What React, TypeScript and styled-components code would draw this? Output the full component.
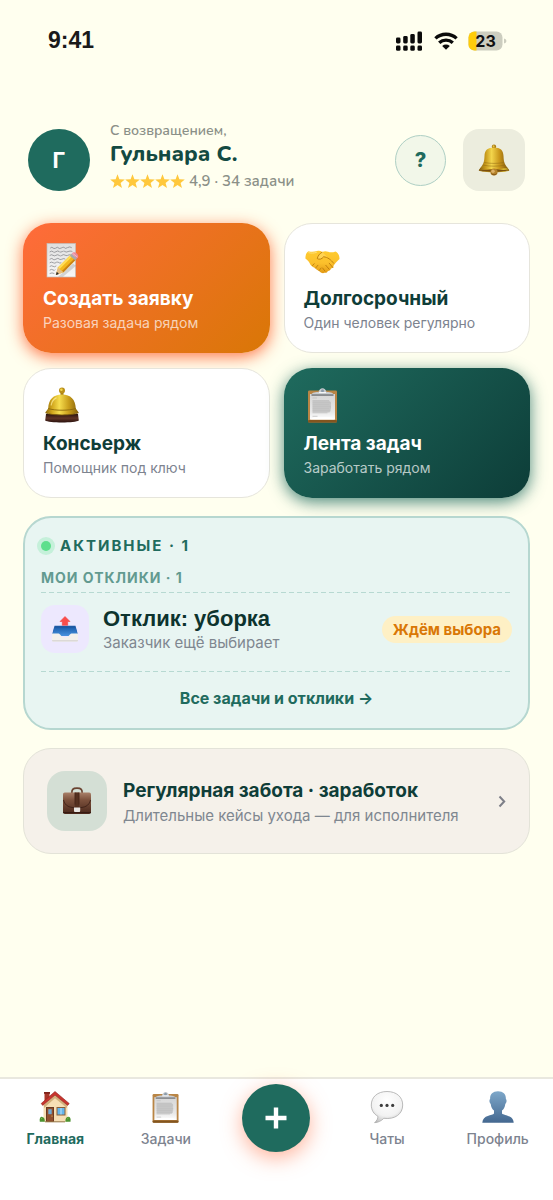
import React from "react";
import styled, { createGlobalStyle, css } from "styled-components";

const GlobalStyle = createGlobalStyle`
  * { box-sizing: border-box; }
  body {
    margin: 0;
    background: #ffffef;
    font-family: Inter, "Noto Sans", sans-serif;
    color: #0f3d38;
  }
  button { font: inherit; color: inherit; cursor: pointer; }
  h1, h2, h3, p { margin: 0; }
  svg { display: block; flex: none; }
`;

const Page = styled.div`
  display: flex;
  flex-direction: column;
  min-height: 100vh;
`;

/* ---------- Status bar ---------- */

const StatusBar = styled.div`
  display: flex;
  align-items: center;
  justify-content: space-between;
  padding: 24px 46px 0 48px;
`;

const Clock = styled.time`
  font: 700 23px/32px "Liberation Sans", sans-serif;
  color: #1a1a1a;
`;

const StatusIcons = styled.div`
  display: flex;
  align-items: center;
  gap: 10px;
  padding-top: 2px;
`;

/* ---------- Header ---------- */

const Header = styled.header`
  display: flex;
  align-items: center;
  padding: 66px 28px 0;
`;

const Avatar = styled.div`
  display: grid;
  place-items: center;
  flex: none;
  width: 62px;
  height: 62px;
  border-radius: 50%;
  background: #1f6b5e;
  color: #fff;
  font-size: 22px;
  font-weight: 700;
`;

const Greeting = styled.div`
  flex: 1;
  min-width: 0;
  margin-left: 20px;
  padding-bottom: 4px;
  font-family: Nunito, Lato, "Open Sans", sans-serif;
  color: #8b9088;
  white-space: nowrap;
`;

const Welcome = styled.p`
  font-size: 14px;
  font-weight: 600;
  line-height: 18px;
`;

const Name = styled.h1`
  font-size: 22px;
  font-weight: 800;
  line-height: 28px;
  color: #134a42;
`;

const Rating = styled.p`
  display: flex;
  align-items: center;
  gap: 4px;
  font-size: 15px;
  font-weight: 600;
  line-height: 26px;
`;

const HelpButton = styled.button`
  flex: none;
  width: 51px;
  height: 51px;
  padding: 0;
  border: 1px solid #aecfc4;
  border-radius: 50%;
  background: #f2f7e9;
  color: #1f6b5e;
  font-size: 20px;
  font-weight: 800;
`;

const BellButton = styled.button`
  display: grid;
  place-items: center;
  flex: none;
  width: 62px;
  height: 62px;
  margin-left: 17px;
  padding: 0;
  border: 0;
  border-radius: 16px;
  background: #ecedde;
`;

/* ---------- Main content ---------- */

const Content = styled.main`
  display: flex;
  flex-direction: column;
  gap: 18px;
  padding: 25px 23px 24px;
`;

const ActionGrid = styled.div`
  display: grid;
  grid-template-columns: 1fr 1fr;
  gap: 15px 14px;
`;

type Tone = "orange" | "plain" | "green";

const tones = {
  plain: css`
    background: #fff;
    border-color: #e6e5dc;
    color: #0f3d38;
  `,
  orange: css`
    background: linear-gradient(135deg, #ff6b3b, #d97706) border-box;
    box-shadow: 0 4px 16px rgba(255, 107, 59, 0.9);
    color: #fff;
  `,
  green: css`
    background: linear-gradient(135deg, #1f6b5e, #0d3d38) border-box;
    box-shadow: 0 4px 16px rgba(31, 107, 94, 0.8);
    color: #fff;
  `,
};

const ActionCard = styled.button<{ $tone: Tone }>`
  display: flex;
  flex-direction: column;
  align-items: flex-start;
  height: 130px;
  padding: 17px 19px 0;
  border: 1px solid transparent;
  border-radius: 28px;
  text-align: left;
  white-space: nowrap;
  ${(p) => tones[p.$tone]}
`;

const ActionTitle = styled.span`
  margin-top: 8px;
  font-size: 19px;
  font-weight: 700;
  line-height: 24px;
`;

const ActionNote = styled.span<{ $tone: Tone }>`
  margin-top: 2px;
  font-size: 14px;
  line-height: 20px;
  color: ${(p) => (p.$tone === "plain" ? "#7d838f" : "rgba(255, 255, 255, 0.7)")};
`;

const ActivePanel = styled.section`
  padding: 18px 16px 20px;
  border: 2px solid #b6d7d0;
  border-radius: 28px;
  background: #e8f5f2;
`;

const PanelTitle = styled.h2`
  display: flex;
  align-items: center;
  gap: 9px;
  font-size: 15px;
  font-weight: 700;
  line-height: 20px;
  letter-spacing: 2px;
  color: #1f6b5e;
`;

const LiveDot = styled.span`
  width: 10px;
  height: 10px;
  border-radius: 50%;
  background: #5ddf8c;
  box-shadow: 0 0 0 4px #c5f0da;
`;

const PanelSubtitle = styled.h3`
  margin: 13px 0 5px;
  font-size: 14px;
  font-weight: 700;
  line-height: 18px;
  letter-spacing: 1px;
  color: #629a90;
`;

const DashedRule = styled.hr`
  height: 1px;
  margin: 0;
  border: 0;
  background: repeating-linear-gradient(90deg, #b7d9d2 0 5px, transparent 5px 8px);
`;

const ReplyRow = styled.article`
  display: flex;
  align-items: center;
  padding: 12px 0 18px;
`;

const IconTile = styled.div<{ $size: number; $color: string }>`
  display: grid;
  place-items: center;
  flex: none;
  width: ${(p) => p.$size}px;
  height: ${(p) => p.$size}px;
  border-radius: ${(p) => (p.$size > 50 ? 18 : 14)}px;
  background: ${(p) => p.$color};
`;

const RowText = styled.div`
  flex: 1;
  min-width: 0;
  white-space: nowrap;
`;

const ReplyText = styled(RowText)`
  margin-left: 14px;
`;

const ReplyTitle = styled.h3`
  font: 700 22px/28px "Liberation Sans", sans-serif;
  color: #0d332e;
`;

const Note = styled.p`
  font-size: 15px;
  line-height: 20px;
  color: #7f8790;
`;

const Badge = styled.span`
  padding: 0 11px;
  border-radius: 14px;
  background: #fef0c5;
  color: #d97706;
  font-size: 15px;
  font-weight: 700;
  line-height: 27px;
  white-space: nowrap;
`;

const AllLink = styled.a`
  display: block;
  padding-top: 16px;
  font-size: 16px;
  font-weight: 700;
  line-height: 20px;
  text-align: center;
  text-decoration: none;
  color: #1f6b5e;
`;

const CareCard = styled.button`
  display: flex;
  align-items: center;
  width: 100%;
  padding: 22px 23px;
  border: 1px solid #e3e3d8;
  border-radius: 28px;
  background: #f5f1ea;
  text-align: left;
`;

const CareText = styled(RowText)`
  margin-left: 16px;
`;

const CareTitle = styled.h2`
  font-size: 19px;
  font-weight: 700;
  line-height: 30px;
`;

/* ---------- Bottom navigation ---------- */

const TabBar = styled.nav`
  display: grid;
  grid-template-columns: repeat(5, 1fr);
  height: 123px;
  margin-top: auto;
  border-top: 2px solid #e9e8df;
  background: #fff;
`;

const Tab = styled.a<{ $active?: boolean }>`
  display: flex;
  flex-direction: column;
  align-items: center;
  gap: 5px;
  padding-top: 11px;
  font-size: 14px;
  font-weight: ${(p) => (p.$active ? 700 : 500)};
  line-height: 20px;
  text-decoration: none;
  color: ${(p) => (p.$active ? "#1f6b5e" : "#7d838f")};
`;

const AddButton = styled.button`
  display: grid;
  place-items: center;
  justify-self: center;
  width: 68px;
  height: 68px;
  margin-top: 5px;
  padding: 0;
  border: 0;
  border-radius: 50%;
  background: #1f6b5e;
  box-shadow: 0 6px 20px rgba(255, 107, 59, 0.5);
`;

/* ---------- Drawings ---------- */

const Signal = () => (
  <svg width="28" height="20" viewBox="0 0 28 20" aria-hidden="true">
    <g fill="#0b0b0b">
      <rect x="0" y="6.500" width="4.500" height="6" rx="1.400" />
      <rect x="7.200" y="5" width="4.500" height="7.500" rx="1.400" />
      <rect x="14.300" y="3" width="4.500" height="9.500" rx="1.400" />
      <rect x="21.500" y="0.500" width="4.500" height="12" rx="1.400" />
      <rect x="0" y="14.500" width="4.500" height="5.300" rx="1.400" />
      <rect x="7.200" y="14.500" width="4.500" height="5.300" rx="1.400" />
      <rect x="14.300" y="14.500" width="4.500" height="5.300" rx="1.400" />
      <rect x="21.500" y="14.500" width="4.500" height="5.300" rx="1.400" />
    </g>
  </svg>
);

const Wifi = () => (
  <svg width="24" height="20" viewBox="0 0 24 20" aria-hidden="true">
    <g fill="none" stroke="#0b0b0b" strokeWidth="3.300">
      <path d="M1.400 7.400a15.600 15.600 0 0 1 21.200 0" />
      <path d="M5.200 11.700a10 10 0 0 1 13.600 0" />
    </g>
    <path d="M8.200 15a5.600 5.600 0 0 1 7.600 0L12 18.800z" fill="#0b0b0b" />
  </svg>
);

const Battery = () => (
  <svg width="39" height="20" viewBox="0 0 39 20" role="img" aria-label="23%">
    <defs>
      <clipPath id="cell"><rect x="0.500" y="0.500" width="34" height="19" rx="6" /></clipPath>
    </defs>
    <g clipPath="url(#cell)">
      <rect width="36" height="20" fill="#cccdbf" />
      <rect width="8.500" height="20" fill="#ffcc0a" />
    </g>
    <path d="M36 7.500c1.800.6 2.400 1.400 2.400 2.500s-.6 1.900-2.400 2.500z" fill="#cccdbf" />
    <text x="17.500" y="15.800" textAnchor="middle" fontFamily="Inter, sans-serif" fontWeight="700" fontSize="16" fill="#111">23</text>
  </svg>
);

const Stars = () => (
  <svg width="75" height="15" viewBox="0 0 75 15" role="img" aria-label="5 звёзд">
    {[0, 15, 30, 45, 60].map((x) => (
      <path
        key={x}
        transform={`translate(${x} 0)`}
        fill="#ffc83d"
        d="M7.500 0.300l1.900 5 5.400.2-4.200 3.400 1.400 5.200-4.500-3-4.500 3 1.400-5.200L.2 5.500l5.400-.2z"
      />
    ))}
  </svg>
);

const BellArt = () => (
  <svg width="32" height="32" viewBox="0 0 32 32" aria-hidden="true">
    <defs>
      <linearGradient id="bellBody" x1="0" x2="1">
        <stop offset="0" stopColor="#8a6410" /><stop offset=".22" stopColor="#c79a1c" />
        <stop offset=".42" stopColor="#f3d54c" /><stop offset=".68" stopColor="#c9961a" />
        <stop offset="1" stopColor="#76500d" />
      </linearGradient>
      <linearGradient id="bellRim" x1="0" x2="1">
        <stop offset="0" stopColor="#7c5512" /><stop offset=".3" stopColor="#e0b326" />
        <stop offset=".6" stopColor="#b98516" /><stop offset=".8" stopColor="#ecd03c" /><stop offset="1" stopColor="#86600f" />
      </linearGradient>
    </defs>
    <circle cx="16" cy="2.800" r="2.200" fill="#a87a14" />
    <circle cx="15.600" cy="2.300" r="1" fill="#e7c443" />
    <path d="M16 3.500c-6.400 0-9.300 2.800-9.500 8.600-.2 6-1.200 8.400-4 11.700L.8 26.600h30.400l-1.700-2.800c-2.800-3.300-3.800-5.700-4-11.700C25.300 6.300 22.400 3.500 16 3.500z" fill="url(#bellBody)" />
    <path d="M4.800 21c6.500 1.600 15.900 1.600 22.400 0M6.200 18.500c6 1.200 13.600 1.200 19.600 0" fill="none" stroke="#8d6611" strokeWidth=".7" opacity=".7" />
    <path d="M2.500 23.800L.7 26.400c4.800 2.500 25.800 2.500 30.600 0l-1.800-2.600c-6 1.600-21 1.600-27 0z" fill="url(#bellRim)" />
    <path d="M2 26.600c6-1.400 22-1.400 28 0-6 1.900-22 1.900-28 0z" fill="#7a4f10" />
    <circle cx="16" cy="28" r="3.600" fill="#b5822a" />
    <circle cx="15" cy="27.200" r="1.700" fill="#dcb068" />
    <path d="M13.500 29.500a3 3 0 0 0 5 0" stroke="#714511" strokeWidth=".8" fill="none" />
  </svg>
);

const NoteArt = () => (
  <svg width="38" height="38" viewBox="0 0 38 38" aria-hidden="true">
    <defs>
      <linearGradient id="sheet" x1="0" y1="0" x2="0" y2="1">
        <stop offset="0" stopColor="#dfdfdf" /><stop offset="1" stopColor="#f7f7f7" />
      </linearGradient>
    </defs>
    <rect x="4" y="2.500" width="28.500" height="33.500" fill="url(#sheet)" stroke="#c4beb9" strokeWidth=".7" />
    <g fill="none" stroke="#6a6c70" strokeWidth=".6" strokeLinecap="round">
      <path d="M7.500 6.900q1.500-1.400 2.500 0t3 0 2.500 0 3 0 3-.1 3-.2 4-.1" strokeDasharray="5 .8 3 .7" />
      <path d="M7 10.700q2-1.400 3 0t3 0 3-.2 3 .2 3-.1 3 0 4-.2" strokeDasharray="3 1 6 .8" />
      <path d="M7 14.300q1.500-1.200 3 0t3 0 3 0 3 0 3-.2 3 .1 3-.1" strokeDasharray="6 .8 4 1" />
      <path d="M7 18.100q2-1.400 3 0t3 0 3-.2 3 .2 3-.2" strokeDasharray="4 .6 7 .8" />
      <path d="M7 21.600q1.500-1.200 3 0t3 0 3 0 2-.1" strokeDasharray="3 .8" />
      <path d="M7 25.300q1.500-1.200 3 0t3-.2" />
      <path d="M7 28.900q1.500-1.200 3 0t2 0M7 32.400q2-1.200 4 0" />
    </g>
    <path d="M15 35.700l15-13 3 2L20 35.800z" fill="#6f6f6f" opacity=".25" />
    <path d="M12.800 34l2.300-7.700L28 13.500l5.200 4.700L20.500 31.300z" fill="#f3b81c" />
    <path d="M15.100 26.300L28 13.500l1.700 1.500L16.600 28z" fill="#ffdc55" />
    <path d="M18.900 30L32 17l1.200 1.200-12.700 13.100z" fill="#c88216" />
    <path d="M12.800 34l2.300-7.700 1.500 1.700 2.300 2 1.600 1.300z" fill="#e5bd83" />
    <path d="M12.800 34l1-3.200 2.200 2.100z" fill="#2b2b2b" />
    <path d="M26.800 14.700l1.900-1.900 5.400 4.600-2 1.900z" fill="#a9a9ad" />
    <path d="M28.700 12.800l1.100-1.100c2-1.900 6.900 2.100 5 4.800l-.8.900z" fill="#e9899a" />
    <path d="M29.500 12.200l4.800 3.900" stroke="#f7bdc5" strokeWidth="1" />
  </svg>
);

const HandshakeArt = () => (
  <svg width="38" height="38" viewBox="0 0 38 38" aria-hidden="true">
    <defs>
      <linearGradient id="hand" x1="0" y1="0" x2="0" y2="1">
        <stop offset="0" stopColor="#ffcb2f" /><stop offset=".55" stopColor="#fbc02c" /><stop offset="1" stopColor="#e39a13" />
      </linearGradient>
    </defs>
    <path d="M4.500 10.300c-2 .7-3.200 4-3.100 7.300 1.700 1.400 3.100 2.300 4 4.200 1.200 3 3.600 4.500 5.600 5.300 1.500 1.800 3.200 2.500 4.700 3.500 1.500 1.600 3.500 1.900 4.700 1.200 1.700.3 3-.5 3.500-1.900 1.700 0 2.800-.9 3-2.400 1.600-.4 2.700-1.400 2.600-2.800 1.900-2.800 4-4.700 6-6.700.1-3.400-1.600-6.800-3.900-7.600-2.800 1-5.100 1.300-7.400.4-2.500-1-4-.7-5.900.3-1.800-1.200-3.200-1.500-5.200-1-3.500.9-5.700 1-8.600.2z" fill="url(#hand)" />
    <path d="M18.300 11.100c-2.800 1.500-4.500 3.800-5 6.500 1.900 1.200 4.400.7 6.300-1.800 3.900.2 7.300 2.900 10.200 6.700" fill="#ffd352" stroke="#b97809" strokeWidth=".9" strokeLinejoin="round" />
    <path d="M25.200 22.200l3.700 4.400M21.800 24.300l3.300 3.900M18.600 27l2.300 3" fill="none" stroke="#bd7c0b" strokeWidth=".9" strokeLinecap="round" />
    <path d="M8.500 24.600l1.700-1.900M11.700 27l2.200-2.700M15.200 29.500l1.800-2.400" fill="none" stroke="#c58510" strokeWidth="1" strokeLinecap="round" />
    <path d="M4.400 11.600c2.800.7 5.700.6 8.400-.3" fill="none" stroke="#ffe07a" strokeWidth="1" />
  </svg>
);

const ServiceBellArt = () => (
  <svg width="38" height="38" viewBox="0 0 38 38" aria-hidden="true">
    <defs>
      <linearGradient id="dome" x1="0" x2="1">
        <stop offset="0" stopColor="#8d6a0c" /><stop offset=".2" stopColor="#d0a51c" />
        <stop offset=".42" stopColor="#f6dd4e" /><stop offset=".7" stopColor="#c99e1b" /><stop offset="1" stopColor="#84600b" />
      </linearGradient>
      <linearGradient id="woodBase" x1="0" y1="0" x2="0" y2="1">
        <stop offset="0" stopColor="#2b1410" /><stop offset=".5" stopColor="#5f3426" /><stop offset="1" stopColor="#2a120e" />
      </linearGradient>
    </defs>
    <path d="M3 28h32l.8 6.500c-3 2.600-30.600 2.600-33.600 0z" fill="url(#woodBase)" />
    <rect x="17.500" y="5" width="3" height="5" fill="#a37a12" />
    <circle cx="19" cy="4.500" r="3" fill="#ba8f18" />
    <circle cx="18.400" cy="3.700" r="1.300" fill="#f2d64f" />
    <path d="M19 8.500C10.200 8.500 5.600 13.500 5.200 22.500L2.300 26.500c4 3.200 29.400 3.200 33.400 0L32.800 22.500C32.400 13.500 27.800 8.500 19 8.500z" fill="url(#dome)" />
    <path d="M5.200 22.500c6.200 2.300 21.400 2.300 27.600 0" fill="none" stroke="#8d6a0c" strokeWidth=".9" />
    <path d="M2.500 26.800c5 2.900 28 2.900 33 0" fill="none" stroke="#7d5b0b" strokeWidth=".8" />
    <path d="M8.200 19c.6-3.700 2.400-5.800 5-7.100" fill="none" stroke="#fff0a0" strokeWidth="1.200" strokeLinecap="round" opacity=".7" />
  </svg>
);

const ClipboardArt = ({ size = 38, id }: { size?: number; id: string }) => (
  <svg width={size} height={size} viewBox="0 0 38 38" aria-hidden="true">
    <defs>
      <linearGradient id={id} x1="0" y1="0" x2="0" y2="1">
        <stop offset="0" stopColor="#d6d6d6" /><stop offset=".7" stopColor="#e8e8e8" /><stop offset="1" stopColor="#fff" />
      </linearGradient>
    </defs>
    <rect x="4" y="4.500" width="29" height="32" rx="1.300" fill="#b98545" />
    <rect x="4" y="34" width="29" height="2.500" rx="1" fill="#83551f" />
    <rect x="6" y="8" width="25" height="25.500" fill={`url(#${id})`} />
    <path d="M6 33.500h25l-4-2.200H10z" fill="#fff" />
    <path d="M8.500 14.200h16.500l2 2v6.500l-1.500 3.800h-17z" fill="#c9c9c9" />
    <g stroke="#bcbcbc" strokeWidth=".7">
      <path d="M8.500 12h4.500M8.500 14.800h16.500M8.500 16.800h18M8.500 18.800h17M8.500 20.800h18.500M8.500 22.800h17M8.500 24.800h18M8.500 26.800h15M8.500 30.300h5" />
    </g>
    <path d="M7.500 9.200c0-2.300 2-2.900 7-3.100.6-2.400 2.200-3.900 4-3.900s3.400 1.500 4 3.900c5 .2 7 .8 7 3.100z" fill="#c9ccd0" />
    <path d="M7.500 8.400h22v1.300h-22z" fill="#6b6e72" />
    <circle cx="18.500" cy="4.700" r="1.500" fill="#8b9cab" />
    <path d="M15 6.500h7" stroke="#f5f7f8" strokeWidth="1" />
  </svg>
);

const OutboxArt = () => (
  <svg width="28" height="28" viewBox="0 0 28 28" aria-hidden="true">
    <defs>
      <linearGradient id="tray" x1="0" y1="0" x2="0" y2="1">
        <stop offset="0" stopColor="#1f62b0" /><stop offset="1" stopColor="#4a93df" />
      </linearGradient>
    </defs>
    <path d="M3.500 10.800h21L27 20H1z" fill="#1e5aa5" />
    <path d="M3.200 13h21.600l2 8H1.200z" fill="url(#tray)" />
    <path d="M1 18.500h6.500c2 0 2.300 4 6.500 4s4.500-4 6.500-4H27v6.600c0 1.100-.5 1.500-1.500 1.500h-23C1.500 26.600 1 26.200 1 25.100z" fill="#f4f1ec" />
    <path d="M1 25h26c0 1.200-.5 1.600-1.500 1.600h-23C1.500 26.600 1 26.200 1 25z" fill="#dcd9d6" />
    <path d="M14 1.500l5 5h-2.300v3.800h-5.400V6.500H9z" fill="#fb4d4a" stroke="#f04444" strokeWidth=".6" strokeLinejoin="round" />
  </svg>
);

const BriefcaseArt = () => (
  <svg width="30" height="30" viewBox="0 0 30 30" aria-hidden="true">
    <defs>
      <linearGradient id="leather" x1="0" y1="0" x2="0" y2="1">
        <stop offset="0" stopColor="#a98069" /><stop offset=".35" stopColor="#7c513c" /><stop offset="1" stopColor="#4a281c" />
      </linearGradient>
    </defs>
    <path d="M9.800 7.500c0-4 .8-5.300 5.200-5.300s5.200 1.300 5.200 5.300" fill="none" stroke="#6a4331" strokeWidth="1.700" />
    <rect x="1" y="6.500" width="28" height="21.500" rx="1.800" fill="url(#leather)" />
    <path d="M1.500 14c1.500 6.200 6 7.800 13.500 7.800S27 20.200 28.500 14" fill="none" stroke="#3e2117" strokeWidth=".9" />
    <path d="M12.800 6.500h4.400v15h-4.400z" fill="#55301f" />
    <path d="M13 6.500v12M17 6.500v12" stroke="#3d2015" strokeWidth=".6" />
    <path d="M12 21.500h6.200v3.300c0 1.200-1 1.900-3.100 1.900S12 26 12 24.800z" fill="#e9e6e2" />
    <path d="M1 26.500h28" stroke="#371b12" strokeWidth="1" />
  </svg>
);

const HouseArt = () => (
  <svg width="34" height="34" viewBox="0 0 34 34" aria-hidden="true">
    <rect x="6.500" y="2" width="5" height="9" fill="#a93629" />
    <path d="M6 2h6v1.800H6z" fill="#7e231b" />
    <path d="M17 3.500L5.500 14.500v17.300h24V14.500z" fill="#f6dfb5" />
    <path d="M17 5L6 15v3L17 8.300 29 18v-3z" fill="#d3b27d" />
    <path d="M17 1.500L3.200 13.500l1.500 1.900L17 5.100l12.700 10.300 1.500-1.900z" fill="#c8352e" stroke="#8e211d" strokeWidth=".6" />
    <rect x="8" y="17" width="8" height="14.800" fill="#6b3a22" />
    <rect x="9" y="18" width="6" height="13.800" fill="#91502f" />
    <rect x="10.300" y="19.200" width="3.400" height="5" fill="#6fa9d0" />
    <circle cx="14" cy="26" r=".6" fill="#f2cf58" />
    <rect x="18.500" y="17" width="9" height="8.500" fill="#8b6039" />
    <rect x="19.500" y="18" width="7" height="6.500" fill="#62b5ed" />
    <path d="M23 18v6.500" stroke="#fff" strokeWidth=".6" />
    <path d="M1.800 31.800c-.6-4 .8-5.300 2.500-4.900 2 .2 2.600 2 2.500 4.900z" fill="#4c9230" />
    <path d="M27.400 31.800c-.1-2.900.7-4.800 2.800-5 1.900-.1 2.800 1.600 2.300 5z" fill="#4c9230" />
    <path d="M3 29l1.300-1M29.200 29l1.300-1" stroke="#82bd4b" strokeWidth="1" />
    <path d="M7 31.300h20v1H7z" fill="#937342" />
  </svg>
);

const ChatArt = () => (
  <svg width="34" height="34" viewBox="0 0 34 34" aria-hidden="true">
    <defs>
      <radialGradient id="bubble" cx=".5" cy=".3" r=".75">
        <stop offset="0" stopColor="#fff" /><stop offset=".65" stopColor="#f2f2f2" /><stop offset="1" stopColor="#bdbdbd" />
      </radialGradient>
    </defs>
    <path d="M17 1.500C7.500 1.500 1.300 7 1.300 15c0 5 2.400 9 6.600 11.300.2 2.300-1 4.300-3.300 6.400 3.500-.2 6.800-1.800 9.200-4.400 11.300 1.400 18.900-4.300 18.900-13.300 0-8-6.200-13.500-15.700-13.500z" fill="url(#bubble)" stroke="#a9a9a9" strokeWidth=".8" />
    <g fill="#3d3d3d"><circle cx="11.300" cy="15.400" r="1.600" /><circle cx="17" cy="15.400" r="1.600" /><circle cx="22.700" cy="15.400" r="1.600" /></g>
  </svg>
);

const PersonArt = () => (
  <svg width="34" height="34" viewBox="0 0 34 34" aria-hidden="true">
    <defs>
      <linearGradient id="person" x1="0" y1="0" x2="0" y2="1">
        <stop offset="0" stopColor="#7ea8ca" /><stop offset="1" stopColor="#446890" />
      </linearGradient>
    </defs>
    <path d="M17 1.200c-5.300 0-8 3-7.900 7.700-1.100.6-.8 4 .6 5 .4 3.200 1.600 5.200 3.300 6.500v3c-1.400 2-11.300 1.300-11.700 9.300h31.400c-.4-8-10.300-7.300-11.700-9.300v-3c1.700-1.300 2.900-3.300 3.300-6.500 1.400-1 1.700-4.400.6-5 .1-4.700-2.600-7.700-7.900-7.700z" fill="url(#person)" />
  </svg>
);

const Chevron = () => (
  <svg width="8" height="13" viewBox="0 0 8 13" aria-hidden="true">
    <path d="M1.500 1.500L6.200 6.500 1.500 11.500" fill="none" stroke="#7d7f88" strokeWidth="2" />
  </svg>
);

const Plus = () => (
  <svg width="22" height="22" viewBox="0 0 22 22" aria-hidden="true">
    <path d="M11 0.500v21M0.500 11h21" stroke="#fff" strokeWidth="4.400" />
  </svg>
);

/* ---------- Screen ---------- */

const actions: { title: string; note: string; tone: Tone; art: React.ReactNode }[] = [
  { title: "Создать заявку", note: "Разовая задача рядом", tone: "orange", art: <NoteArt /> },
  { title: "Долгосрочный", note: "Один человек регулярно", tone: "plain", art: <HandshakeArt /> },
  { title: "Консьерж", note: "Помощник под ключ", tone: "plain", art: <ServiceBellArt /> },
  { title: "Лента задач", note: "Заработать рядом", tone: "green", art: <ClipboardArt id="sheetCard" /> },
];

export default function App() {
  return (
    <Page>
      <GlobalStyle />
      <StatusBar>
        <Clock>9:41</Clock>
        <StatusIcons>
          <Signal />
          <Wifi />
          <Battery />
        </StatusIcons>
      </StatusBar>

      <Header>
        <Avatar>Г</Avatar>
        <Greeting>
          <Welcome>С возвращением,</Welcome>
          <Name>Гульнара С.</Name>
          <Rating><Stars />4,9 · 34 задачи</Rating>
        </Greeting>
        <HelpButton type="button">?</HelpButton>
        <BellButton type="button" aria-label="Уведомления"><BellArt /></BellButton>
      </Header>

      <Content>
        <ActionGrid>
          {actions.map((a) => (
            <ActionCard key={a.title} type="button" $tone={a.tone}>
              {a.art}
              <ActionTitle>{a.title}</ActionTitle>
              <ActionNote $tone={a.tone}>{a.note}</ActionNote>
            </ActionCard>
          ))}
        </ActionGrid>

        <ActivePanel>
          <PanelTitle><LiveDot />АКТИВНЫЕ · 1</PanelTitle>
          <PanelSubtitle>МОИ ОТКЛИКИ · 1</PanelSubtitle>
          <DashedRule />
          <ReplyRow>
            <IconTile $size={48} $color="#ede8fe"><OutboxArt /></IconTile>
            <ReplyText>
              <ReplyTitle>Отклик: уборка</ReplyTitle>
              <Note>Заказчик ещё выбирает</Note>
            </ReplyText>
            <Badge>Ждём выбора</Badge>
          </ReplyRow>
          <DashedRule />
          <AllLink href="#tasks">Все задачи и отклики →</AllLink>
        </ActivePanel>

        <CareCard type="button">
          <IconTile $size={60} $color="#d4dfd5"><BriefcaseArt /></IconTile>
          <CareText>
            <CareTitle>Регулярная забота · заработок</CareTitle>
            <Note>Длительные кейсы ухода — для исполнителя</Note>
          </CareText>
          <Chevron />
        </CareCard>
      </Content>

      <TabBar>
        <Tab href="#home" $active><HouseArt />Главная</Tab>
        <Tab href="#tasks"><ClipboardArt size={34} id="sheetTab" />Задачи</Tab>
        <AddButton type="button" aria-label="Добавить"><Plus /></AddButton>
        <Tab href="#chats"><ChatArt />Чаты</Tab>
        <Tab href="#profile"><PersonArt />Профиль</Tab>
      </TabBar>
    </Page>
  );
}
